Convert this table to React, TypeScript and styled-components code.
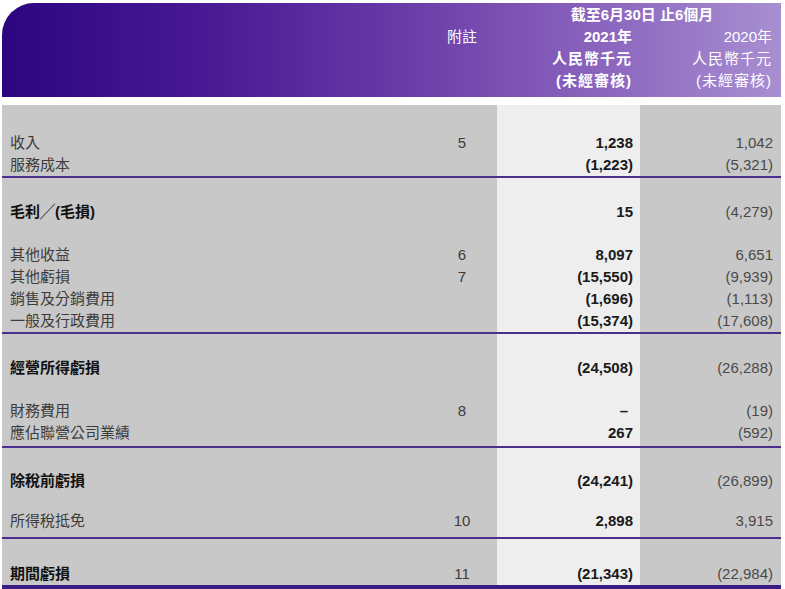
import styled, { createGlobalStyle } from 'styled-components'

const GlobalStyle = createGlobalStyle`
  html, body {
    margin: 0;
    padding: 0;
    background: #ffffff;
  }
  body {
    font-family: 'Liberation Sans', 'Noto Sans CJK TC', Arial, sans-serif;
    font-size: 15px;
  }
`

const COLS = '425px 70px 143px 141px'

const Page = styled.div`
  width: 779px;
  padding: 3px 0 0 2px;
`

const Header = styled.div`
  display: grid;
  grid-template-columns: ${COLS};
  grid-template-rows: repeat(4, 22px);
  height: 94px;
  box-sizing: border-box;
  padding: 1px 0 5px;
  border-top-left-radius: 32px;
  background: linear-gradient(90deg, #2c0680 0%, #4a1b94 28%, #6a3ca8 52%, #8a63bd 76%, #a88fd1 100%);
  color: #ffffff;
  line-height: 22px;
  margin-bottom: 8px;
`

const HeadPeriod = styled.div`
  grid-column: 3 / 5;
  grid-row: 1;
  text-align: center;
  font-weight: 700;
  padding-left: 6px;
`

const HeadNote = styled.div`
  grid-column: 2;
  grid-row: 2;
  text-align: center;
`

const HeadYear = styled.div<{ $cur?: boolean; $col: number }>`
  grid-column: ${(p) => p.$col};
  grid-row: 2 / 5;
  display: flex;
  flex-direction: column;
  align-items: flex-end;
  padding-right: ${(p) => (p.$cur ? 8 : 9)}px;
  font-weight: ${(p) => (p.$cur ? 700 : 400)};
  letter-spacing: 1px;

  span:first-child {
    letter-spacing: 0;
  }
`

const Row = styled.div<{ $h: number }>`
  display: grid;
  grid-template-columns: ${COLS};
  height: ${(p) => p.$h}px;
  line-height: ${(p) => p.$h - 1}px;
  background: #c8c8c8;
`

const Label = styled.div<{ $bold?: boolean }>`
  padding-left: 8px;
  color: ${(p) => (p.$bold ? '#111111' : '#3c3c3c')};
  font-weight: ${(p) => (p.$bold ? 700 : 400)};
  white-space: nowrap;
`

const Note = styled.div`
  text-align: center;
  color: #3c3c3c;
`

const Current = styled.div`
  background: #eeeeee;
  text-align: right;
  padding-right: 7px;
  font-weight: 700;
  color: #1a1a1a;
`

const Previous = styled.div`
  text-align: right;
  padding-right: 8px;
  color: #4a4a4a;
`

const Rule = styled.div<{ $thick?: boolean }>`
  height: ${(p) => (p.$thick ? 4 : 2)}px;
  background: ${(p) => (p.$thick ? '#3a1c84' : '#4b2f8c')};
`

const Dash = styled.span`
  padding-right: 5px;
`

type Block =
  | { kind: 'gap'; h: number }
  | { kind: 'rule'; thick?: boolean }
  | { kind: 'row'; label: string; note?: string; cur: string; prev: string; bold?: boolean; h?: number }

const blocks: Block[] = [
  { kind: 'gap', h: 27 },
  { kind: 'row', label: '收入', note: '5', cur: '1,238', prev: '1,042' },
  { kind: 'row', label: '服務成本', cur: '(1,223)', prev: '(5,321)' },
  { kind: 'rule' },
  { kind: 'gap', h: 23 },
  { kind: 'row', label: '毛利╱(毛損)', cur: '15', prev: '(4,279)', bold: true },
  { kind: 'gap', h: 21 },
  { kind: 'row', label: '其他收益', note: '6', cur: '8,097', prev: '6,651' },
  { kind: 'row', label: '其他虧損', note: '7', cur: '(15,550)', prev: '(9,939)' },
  { kind: 'row', label: '銷售及分銷費用', cur: '(1,696)', prev: '(1,113)' },
  { kind: 'row', label: '一般及行政費用', cur: '(15,374)', prev: '(17,608)' },
  { kind: 'rule' },
  { kind: 'gap', h: 23 },
  { kind: 'row', label: '經營所得虧損', cur: '(24,508)', prev: '(26,288)', bold: true },
  { kind: 'gap', h: 21 },
  { kind: 'row', label: '財務費用', note: '8', cur: '–', prev: '(19)' },
  { kind: 'row', label: '應佔聯營公司業績', cur: '267', prev: '(592)' },
  { kind: 'gap', h: 2 },
  { kind: 'rule' },
  { kind: 'gap', h: 22 },
  { kind: 'row', label: '除稅前虧損', cur: '(24,241)', prev: '(26,899)', bold: true },
  { kind: 'gap', h: 18 },
  { kind: 'row', label: '所得稅抵免', note: '10', cur: '2,898', prev: '3,915' },
  { kind: 'gap', h: 5 },
  { kind: 'rule' },
  { kind: 'gap', h: 25 },
  { kind: 'row', label: '期間虧損', note: '11', cur: '(21,343)', prev: '(22,984)', bold: true, h: 21 },
  { kind: 'rule', thick: true },
]

const App = () => {
  return (
    <>
      <GlobalStyle />
      <Page>
        <Header>
          <HeadPeriod>截至6月30日 止6個月</HeadPeriod>
          <HeadNote>附註</HeadNote>
          <HeadYear $cur $col={3}>
            <span>2021年</span>
            <span>人民幣千元</span>
            <span>(未經審核)</span>
          </HeadYear>
          <HeadYear $col={4}>
            <span>2020年</span>
            <span>人民幣千元</span>
            <span>(未經審核)</span>
          </HeadYear>
        </Header>
        {blocks.map((b, i) => {
          if (b.kind === 'rule') return <Rule key={i} $thick={b.thick} />
          if (b.kind === 'gap')
            return (
              <Row key={i} $h={b.h}>
                <Label />
                <Note />
                <Current />
                <Previous />
              </Row>
            )
          return (
            <Row key={i} $h={b.h ?? 22}>
              <Label $bold={b.bold}>{b.label}</Label>
              <Note>{b.note}</Note>
              <Current>{b.cur === '–' ? <Dash>–</Dash> : b.cur}</Current>
              <Previous>{b.prev}</Previous>
            </Row>
          )
        })}
      </Page>
    </>
  )
}

export default App
